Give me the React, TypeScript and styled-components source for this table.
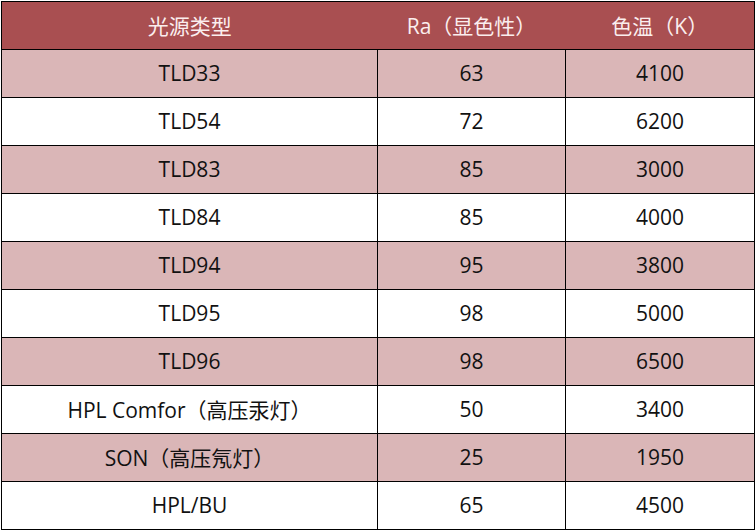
import React from 'react';
import styled, { createGlobalStyle } from 'styled-components';

const GlobalStyle = createGlobalStyle`
  html, body {
    margin: 0;
    padding: 0;
    background: #ffffff;
  }
`;

const Table = styled.table`
  margin: 1px 0 0 1px;
  width: 753px;
  border-collapse: collapse;
  table-layout: fixed;
  font-family: "Open Sans", "Noto Sans CJK SC", sans-serif;
  font-size: 21px;
  color: #111111;
`;

const HeadRow = styled.tr`
  height: 48px;
  background: #a94f51;
`;

const HeadCell = styled.th`
  font-weight: 400;
  color: #fbeeee;
  text-align: center;
  padding: 0 0 2px;
  border-top: 1px solid #000;
  border-bottom: 1px solid #000;
  &:first-child { border-left: 1px solid #000; }
  &:last-child { border-right: 1px solid #000; }
`;

const Row = styled.tr<{ $shaded: boolean }>`
  height: 48px;
  background: ${(p) => (p.$shaded ? '#dab6b7' : '#ffffff')};
`;

const Cell = styled.td`
  border: 1px solid #000;
  text-align: center;
  padding: 0 0 1px;
`;

const rows = [
  ['TLD33', '63', '4100'],
  ['TLD54', '72', '6200'],
  ['TLD83', '85', '3000'],
  ['TLD84', '85', '4000'],
  ['TLD94', '95', '3800'],
  ['TLD95', '98', '5000'],
  ['TLD96', '98', '6500'],
  ['HPL Comfor（高压汞灯）', '50', '3400'],
  ['SON（高压氖灯）', '25', '1950'],
  ['HPL/BU', '65', '4500'],
];

const App: React.FC = () => (
  <>
    <GlobalStyle />
    <Table>
      <colgroup>
        <col style={{ width: 376 }} />
        <col style={{ width: 188 }} />
        <col style={{ width: 189 }} />
      </colgroup>
      <thead>
        <HeadRow>
          <HeadCell>光源类型</HeadCell>
          <HeadCell>Ra（显色性）</HeadCell>
          <HeadCell>色温（K）</HeadCell>
        </HeadRow>
      </thead>
      <tbody>
        {rows.map((r, i) => (
          <Row key={r[0]} $shaded={i % 2 === 0}>
            {r.map((v, j) => (
              <Cell key={j}>{v}</Cell>
            ))}
          </Row>
        ))}
      </tbody>
    </Table>
  </>
);

export default App;
